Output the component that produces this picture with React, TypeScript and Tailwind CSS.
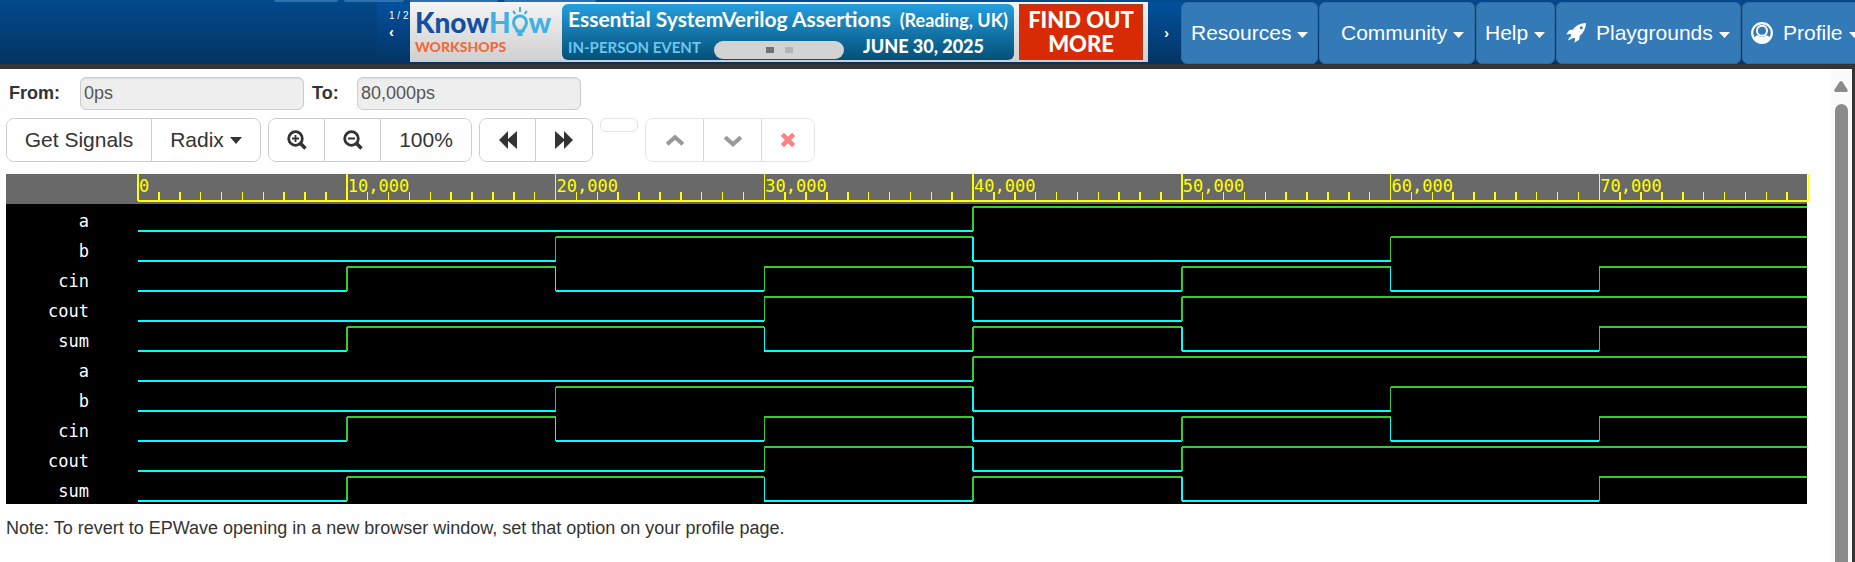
import React from "react";

type Level = 0 | 1;
type Signal = { name: string; values: Level[] };

const SIGNALS: Signal[] = [
  { name: "a", values: [0, 0, 0, 0, 1, 1, 1, 1] },
  { name: "b", values: [0, 0, 1, 1, 0, 0, 1, 1] },
  { name: "cin", values: [0, 1, 0, 1, 0, 1, 0, 1] },
  { name: "cout", values: [0, 0, 0, 1, 0, 1, 1, 1] },
  { name: "sum", values: [0, 1, 1, 0, 1, 0, 0, 1] },
];
const ROWS = [...SIGNALS, ...SIGNALS];
const STEPS = 8;
const LOW = "#00ffff";
const HIGH = "#32cd32";
const pct = (step: number) => `${(step / STEPS) * 100}%`;

function Caret({ className = "" }: { className?: string }) {
  return (
    <svg viewBox="0 0 12 6" className={`h-[6px] ${className}`} fill="currentColor" preserveAspectRatio="none" aria-hidden="true">
      <path d="M0 0h12L6 6z" />
    </svg>
  );
}

function Rocket() {
  return (
    <svg viewBox="0 0 20 20" className="mr-[10px] size-5" fill="currentColor" aria-hidden="true">
      <path
        fillRule="evenodd"
        d="M20 0C14 .3 10 2.500 7.200 6.400L3.400 6.900.2 11.600l4.200-.7 1 1L4.500 14l1.600 1.600 2.100-.9 1 1-.9 4.100 4.900-3 .5-4C17.300 10 19.700 6 20 0zM15.300 3.200a1.500 1.500 0 1 1 0 3 1.500 1.500 0 0 1 0-3z"
      />
      <path d="M4 13.500 1.800 17.500 6 15.800z" />
    </svg>
  );
}

function UserCircle() {
  return (
    <svg viewBox="0 0 22 22" className="mr-[10px] size-[22px]" aria-hidden="true">
      <circle cx="11" cy="11" r="9.800" fill="none" stroke="currentColor" strokeWidth="2.200" />
      <circle cx="11" cy="8.800" r="5" fill="none" stroke="currentColor" strokeWidth="2" />
      <path d="M2.500 16c1.500-2 3-2.500 4.500-2.700 2.300 2 5.700 2 8 0 1.500.2 3 .7 4.500 2.700-2 3-5 4.700-8.500 4.700S4.500 19 2.500 16z" fill="currentColor" />
    </svg>
  );
}

function NavButton({ children, className = "" }: { children: React.ReactNode; className?: string }) {
  return (
    <button
      type="button"
      className={`flex h-full shrink-0 items-center rounded-md border border-[#2e6da4] bg-[#337ab7] text-[21px] whitespace-nowrap text-white ${className}`}
    >
      {children}
      <Caret className="mt-1 ml-[6px] w-[11px]" />
    </button>
  );
}

function Header() {
  return (
    <header className="overflow-hidden bg-linear-to-b from-[#034a8c] to-[#043463]">
      <div className="flex h-[2px] gap-[6px] pl-[274px]">
        <div className="w-16 rounded-b-md bg-[#2f72ad]" />
        <div className="w-[60px] rounded-b-md bg-[#2f72ad]" />
        <div className="w-[88px] rounded-b-md bg-[#2f72ad]" />
        <div className="w-[92px] rounded-b-md bg-[#2f72ad]" />
      </div>
      <div className="flex h-[62px] pl-[377px]">
        <section className="flex shrink-0 bg-linear-to-b from-[#02519e] to-[#043463]" aria-label="Promotions">
          <div className="flex w-[33px] flex-col items-start pt-1 pl-3 text-white">
            <span className="text-[10px] leading-5 whitespace-nowrap">1 / 2</span>
            <button type="button" aria-label="Previous" className="text-[15px] leading-3 font-bold">
              ‹
            </button>
          </div>
          <a
            href="#workshops"
            className="flex h-[60px] w-[738px] bg-linear-to-b from-[#f4f4f4] to-[#cfcfcf] py-[2px] pr-[5px] font-['Lato',sans-serif] font-bold"
          >
            <div className="w-[152px] pt-[3px] pl-[5px]">
              <div className="flex text-[28px] leading-[30px] font-black">
                <span className="text-[#1450a0]">Know</span>
                <span className="text-[#41b0e4]">H</span>
                <svg viewBox="0 0 18 32" className="h-8 w-[18px]" fill="none" stroke="#41b0e4" aria-hidden="true">
                  <path d="M6 24c0-3-3.500-4-3.500-8.500a6.500 6.500 0 0 1 13 0C15.500 20 12 21 12 24z" strokeWidth="3" />
                  <path d="M6.500 27h5" strokeWidth="4" />
                  <path d="M9 0v5M2 4l2.500 3M16 4l-2.500 3" strokeWidth="2" />
                </svg>
                <span className="text-[#41b0e4]">w</span>
              </div>
              <div className="text-[14px] leading-[15px] font-black text-[#f26a3c]">WORKSHOPS</div>
            </div>
            <div className="relative w-[452px] rounded-md bg-linear-to-b from-[#259fdf] to-[#045078] px-[6px] text-white">
              <div className="flex items-baseline justify-between pt-px leading-7 whitespace-nowrap">
                <span className="text-[21px]">Essential SystemVerilog Assertions</span>
                <span className="text-[18px]">(Reading, UK)</span>
              </div>
              <div className="flex items-baseline justify-between pr-6 leading-6 whitespace-nowrap">
                <span className="text-[15px] text-[#6cc5f0]">IN-PERSON EVENT</span>
                <span className="text-[18px] font-black">JUNE 30, 2025</span>
              </div>
              <div className="absolute top-[37px] left-[152px] flex h-[18px] w-[130px] items-center justify-center gap-[11px] rounded-full bg-[#d3d3d3]">
                <span className="h-[6px] w-2 bg-[#717171]" />
                <span className="h-[6px] w-2 bg-[#b4b4b4]" />
              </div>
            </div>
            <div className="ml-[5px] flex flex-1 flex-col justify-center border border-[#b33a22] bg-[#d82a04] text-center text-[22px] leading-6 font-black text-white">
              <span>FIND OUT</span>
              <span>MORE</span>
            </div>
          </a>
          <button type="button" aria-label="Next" className="w-[33px] pl-1 text-[15px] font-bold text-white">
            ›
          </button>
        </section>
        <nav className="flex gap-px">
          <NavButton className="w-[137px] pl-[9px]">Resources</NavButton>
          <NavButton className="w-[156px] pl-[21px]">Community</NavButton>
          <NavButton className="w-[79px] pl-2">Help</NavButton>
          <NavButton className="w-[185px] pl-[9px]">
            <Rocket />
            Playgrounds
          </NavButton>
          <NavButton className="w-32 pl-2">
            <UserCircle />
            Profile
          </NavButton>
        </nav>
      </div>
    </header>
  );
}

function Magnifier({ plus = false }: { plus?: boolean }) {
  return (
    <svg viewBox="0 0 20 20" className="size-5" fill="none" stroke="currentColor" aria-hidden="true">
      <circle cx="8.500" cy="8.500" r="6.800" strokeWidth="2.800" />
      <path d="M13.300 13.300l5.200 5.200" strokeWidth="3.600" />
      <path d={plus ? "M5 8.500h7M8.500 5v7" : "M5 8.500h7"} strokeWidth="1.800" />
    </svg>
  );
}

function Glyph({ d, className }: { d: string; className: string }) {
  return (
    <svg viewBox="0 0 20 20" className={className} fill="currentColor" aria-hidden="true">
      <path d={d} />
    </svg>
  );
}

function Group({ children, className = "border-[#ccc] divide-[#ccc]" }: { children: React.ReactNode; className?: string }) {
  return <div className={`flex h-11 divide-x overflow-hidden rounded-lg border ${className}`}>{children}</div>;
}

function Tool({ children, label, className }: { children: React.ReactNode; label?: string; className: string }) {
  return (
    <button type="button" aria-label={label} className={`flex items-center justify-center bg-white text-[21px] whitespace-nowrap ${className}`}>
      {children}
    </button>
  );
}

function Toolbar() {
  return (
    <div className="mt-2 flex items-start gap-[7px]" role="toolbar">
      <Group>
        <Tool className="w-[145px]">Get Signals</Tool>
        <Tool className="w-[108px]">
          Radix
          <Caret className="ml-[6px] h-[7px] w-3" />
        </Tool>
      </Group>
      <Group>
        <Tool className="w-14" label="Zoom in"><Magnifier plus /></Tool>
        <Tool className="w-14" label="Zoom out"><Magnifier /></Tool>
        <Tool className="w-[90px]">100%</Tool>
      </Group>
      <Group>
        <Tool className="w-14" label="Previous edge"><Glyph className="size-5" d="M10 1v8L19 1v18L10 11v8L1 10z" /></Tool>
        <Tool className="w-14" label="Next edge"><Glyph className="size-5" d="M10 1v8L1 1v18L10 11v8L19 10z" /></Tool>
      </Group>
      <button type="button" aria-label="Cursor" className="h-[14px] w-[38px] rounded-md border border-[#e3e3e3] bg-white" />
      <Group className="border-[#e3e3e3] divide-[#d8d8d8]">
        <Tool className="w-[58px] text-[#999]" label="Move up"><Glyph className="size-5" d="M10 4.500l9.200 8.300-2.700 3L10 10l-6.500 5.800-2.700-3z" /></Tool>
        <Tool className="w-[58px] text-[#999]" label="Move down"><Glyph className="size-5" d="M10 17L.8 8.700l2.700-3L10 11.500l6.500-5.800 2.700 3z" /></Tool>
        <Tool className="w-[52px] text-[#ff8080]" label="Remove"><Glyph className="size-[18px]" d="M5.500 2L10 6.500 14.500 2 18 5.500 13.500 10 18 14.500 14.500 18 10 13.500 5.500 18 2 14.500 6.500 10 2 5.500z" /></Tool>
      </Group>
    </div>
  );
}

function Ruler() {
  const ticks = Array.from({ length: 80 }, (_, i) => i);
  return (
    <div className="flex h-[30px] bg-[#696969] pl-[132px]">
      <svg className="-mr-px h-full flex-1 overflow-visible" shapeRendering="crispEdges" stroke="#ffff00" aria-hidden="true">
        {ticks.map((i) => (
          <line key={i} x1={pct(i / 10)} x2={pct(i / 10)} y1={i % 10 ? 18 : 0} y2="27" strokeWidth="1.500" />
        ))}
        <line x1="0" x2="100%" y1="27" y2="27" strokeWidth="2" />
        <line x1="100%" x2="100%" y1="0" y2="27" strokeWidth="1" />
        {Array.from({ length: STEPS }, (_, i) => (
          <text
            key={i}
            x={pct(i)}
            y="18"
            dx="1"
            stroke="none"
            fill="#ffff00"
            className="font-['DejaVu_Sans_Mono',monospace] text-[17px]"
          >
            {(i * 10000).toLocaleString("en-US")}
          </text>
        ))}
      </svg>
    </div>
  );
}

function WaveRow({ signal }: { signal: Signal }) {
  const { name, values } = signal;
  return (
    <div className="flex h-[30px] overflow-hidden">
      <div className="w-[132px] pr-[49px] text-right font-['DejaVu_Sans_Mono',monospace] text-[17px] leading-[34px] text-white">
        {name}
      </div>
      <svg className="-mr-px h-full flex-1" shapeRendering="crispEdges" aria-hidden="true">
        {values.map((v, i) => (
          <g key={i} stroke={v ? HIGH : LOW}>
            <line x1={pct(i)} x2={pct(i + 1)} y1={v ? 3 : 27} y2={v ? 3 : 27} strokeWidth="2" />
            {i > 0 && values[i - 1] !== v && <line x1={pct(i)} x2={pct(i)} y1="3" y2="27" strokeWidth="1.500" />}
          </g>
        ))}
      </svg>
    </div>
  );
}

function TimeField({ id, label, value, labelClass }: { id: string; label: string; value: string; labelClass: string }) {
  return (
    <>
      <label htmlFor={id} className={`font-bold ${labelClass}`}>{label}</label>
      <input
        id={id}
        readOnly
        defaultValue={value}
        className="h-[33px] w-56 rounded-md border border-[#ccc] bg-[#eee] px-[3px] text-[#555] shadow-[inset_0_1px_1px_rgba(0,0,0,0.075)] outline-none"
      />
    </>
  );
}

export default function App() {
  return (
    <div className="flex h-screen flex-col overflow-hidden bg-white font-['Liberation_Sans',Arial,sans-serif] text-[18px] text-[#333]">
      <Header />
      <div className="flex min-h-0 flex-1 border-t-[5px] border-r-[3px] border-[#353535]">
        <main className="min-w-0 flex-1 pt-2 pr-[23px] pl-[6px]">
          <div className="flex items-center pl-[3px]">
            <TimeField id="from" label="From:" value="0ps" labelClass="w-[71px]" />
            <TimeField id="to" label="To:" value="80,000ps" labelClass="ml-2 w-[45px]" />
          </div>
          <Toolbar />
          <section className="mt-3 bg-black" aria-label="Waveforms">
            <Ruler />
            {ROWS.map((s, i) => (
              <WaveRow key={i} signal={s} />
            ))}
          </section>
          <p className="mt-3 leading-6">
            Note: To revert to EPWave opening in a new browser window, set that option on your profile page.
          </p>
        </main>
        <div className="flex w-[22px] flex-col items-center bg-[#fbfbfb] pt-3" aria-hidden="true">
          <svg viewBox="0 0 14 11" className="h-[11px] w-[14px]" fill="#8b8b8b">
            <path d="M7 0q.8 0 1.400.8l5.200 8Q14.300 11 12.500 11h-11Q-.3 11 .4 8.800l5.200-8Q6.200 0 7 0z" />
          </svg>
          <div className="mt-3 w-[13px] flex-1 rounded-t-full bg-[#8b8b8b]" />
        </div>
      </div>
    </div>
  );
}
